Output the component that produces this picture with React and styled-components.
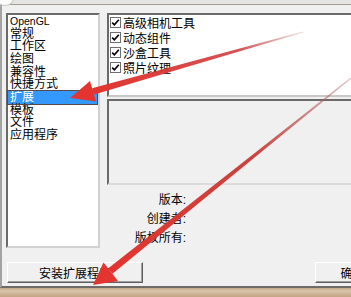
import React from 'react';
import styled, { createGlobalStyle } from 'styled-components';

const GlobalStyle = createGlobalStyle`
  html, body {
    margin: 0;
    padding: 0;
    background: #f0f0f0;
  }
  body {
    font-family: "Liberation Sans", "Noto Sans CJK SC", sans-serif;
    font-size: 12px;
    color: #000;
  }
`

const Screen = styled.div`
  position: relative;
  width: 351px;
  height: 297px;
  overflow: hidden;
  background: #f0f0f0;
`

const TopStrip = styled.div`
  height: 4px;
  background: #e4e4e4;
  position: relative;
  &::before {
    content: '';
    position: absolute;
    left: -4px;
    top: -10px;
    width: 16px;
    height: 14px;
    border-radius: 50%;
    background: #fbfbfb;
    border: 1px solid #c8c8c8;
  }
`

const Dialog = styled.div`
  width: 400px;
  height: 284px;
  box-sizing: border-box;
  border-top: 1px solid #a89c8e;
  border-left: 2px solid #a3a3a3;
  border-bottom: 2px solid #6e6a66;
  display: flex;
  flex-direction: column;
`

const Main = styled.div`
  display: flex;
  align-items: flex-start;
  height: 235px;
  margin-top: 8px;
  margin-left: 4px;
  gap: 7px;
`

const ListBox = styled.div`
  width: 94px;
  height: 235px;
  box-sizing: border-box;
  background: #fff;
  border: 2px solid;
  border-color: #6a6a6a #d2d2d2 #d2d2d2 #6a6a6a;
  padding-top: 0;
`

const Item = styled.div`
  height: 12.67px;
  line-height: 12.67px;
  padding-left: 2px;
  margin-right: 1px;
  font-size: ${p => (p.$latin ? '10.5px' : '12px')};
  white-space: nowrap;
  box-sizing: border-box;
  background: ${p => (p.$selected ? '#3399ff' : 'transparent')};
  color: ${p => (p.$selected ? '#fff' : '#000')};
  outline: ${p => (p.$selected ? '1px solid #5a4848' : 'none')};
  outline-offset: 0;
`

const RightColumn = styled.div`
  flex: 1;
  display: flex;
  flex-direction: column;
`

const CheckPanel = styled.div`
  height: 84px;
  box-sizing: border-box;
  background: #fff;
  border: 2px solid;
  border-color: #6a6a6a #d2d2d2 #c8c8c8 #6a6a6a;
`

const CheckRow = styled.div`
  display: flex;
  align-items: center;
  height: 15px;
  padding-left: 1px;
  gap: 2px;
  white-space: nowrap;
`

const Box = styled.span`
  width: 11px;
  height: 11px;
  box-sizing: border-box;
  border: 1px solid #6f6f6f;
  background: #fff;
  display: flex;
  align-items: center;
  justify-content: center;
`

const DescPanel = styled.div`
  margin-top: 2px;
  height: 86px;
  box-sizing: border-box;
  background: #f0f0f0;
  border: 2px solid;
  border-color: #6a6a6a #dcdcdc #dcdcdc #6a6a6a;
`

const InfoList = styled.div`
  margin-top: 6px;
  width: 79px;
  text-align: right;
`

const InfoRow = styled.div`
  height: 19px;
  line-height: 19px;
  white-space: nowrap;
`

const Footer = styled.div`
  display: flex;
  margin-top: 14px;
  padding: 0 10px 0 5px;
`

const Button = styled.div`
  width: ${p => p.$w}px;
  height: 21px;
  box-sizing: border-box;
  margin-left: ${p => (p.$right ? 'auto' : '0')};
  background: #f0f0f0;
  border: 1px solid;
  border-color: #ffffff #5e5e5e #5e5e5e #ffffff;
  box-shadow: inset -1px -1px 0 #a0a0a0;
  display: flex;
  align-items: center;
  justify-content: center;
  font-size: 12px;
  white-space: nowrap;
`

const TanBar = styled.div`
  height: 9px;
  background: linear-gradient(#c3a888 0, #d8c6ae 3px, #cdb293 6px, #c2a584 9px);
`

const Overlay = styled.svg`
  position: absolute;
  left: 0;
  top: 0;
  pointer-events: none;
`

const categories = ['OpenGL', '常规', '工作区', '绘图', '兼容性', '快捷方式', '扩展', '模板', '文件', '应用程序'];
const plugins = ['高级相机工具', '动态组件', '沙盒工具', '照片纹理'];

const Check = () => (
  <Box>
    <svg width="9" height="9" viewBox="0 0 9 9">
      <path d="M1.2 4.6 L3.4 6.8 L7.8 1.8" fill="none" stroke="#000" strokeWidth="1.7" />
    </svg>
  </Box>
)

const Arrows = () => (
  <Overlay width="351" height="297" viewBox="0 0 351 297">
    <defs>
      <linearGradient id="fade1" x1="93" y1="91" x2="303" y2="32" gradientUnits="userSpaceOnUse">
        <stop offset="0" stopColor="#e3342f" />
        <stop offset="0.7" stopColor="#d04040" stopOpacity="0.9" />
        <stop offset="1" stopColor="#b86060" stopOpacity="0.2" />
      </linearGradient>
      <linearGradient id="fade2" x1="110" y1="271" x2="351" y2="78" gradientUnits="userSpaceOnUse">
        <stop offset="0" stopColor="#e3342f" />
        <stop offset="0.6" stopColor="#c83a36" stopOpacity="0.95" />
        <stop offset="1" stopColor="#a86060" stopOpacity="0.4" />
      </linearGradient>
    </defs>
    <polygon points="92,88.3 94.1,94.6 303.2,32.5 302.8,31.5" fill="url(#fade1)" />
    <polygon points="70,98 96,101.5 90,81" fill="#e3342f" />
    <polygon points="108,268.6 112.4,273.8 351.3,78.4 350.7,77.6" fill="url(#fade2)" />
    <polygon points="93,285 118,281 103.5,262.5" fill="#e3342f" />
  </Overlay>
)

const App = () => {
  return (
    <Screen>
      <GlobalStyle />
      <TopStrip />
      <Dialog>
        <Main>
          <ListBox>
            {categories.map((c, i) => (
              <Item key={c} $latin={i === 0} $selected={c === '扩展'}>{c}</Item>
            ))}
          </ListBox>
          <RightColumn>
            <CheckPanel>
              {plugins.map(p => (
                <CheckRow key={p}>
                  <Check />
                  <span>{p}</span>
                </CheckRow>
              ))}
            </CheckPanel>
            <DescPanel />
            <InfoList>
              <InfoRow>版本:</InfoRow>
              <InfoRow>创建者:</InfoRow>
              <InfoRow>版权所有:</InfoRow>
            </InfoList>
          </RightColumn>
        </Main>
        <Footer>
          <Button $w={136}>安装扩展程序</Button>
          <Button $w={75} $right>确定</Button>
        </Footer>
      </Dialog>
      <TanBar />
      <Arrows />
    </Screen>
  )
}

export default App;
